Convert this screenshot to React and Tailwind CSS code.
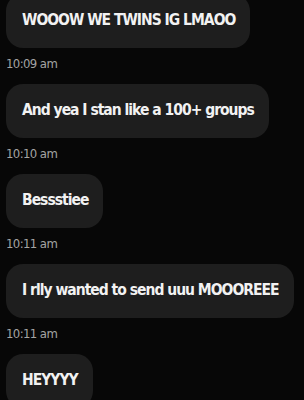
import React from 'react';

const messages = [
  { text: 'WOOOW WE TWINS IG LMAOO', time: '10:09 am' },
  { text: 'And yea I stan like a 100+ groups', time: '10:10 am' },
  { text: 'Bessstiee', time: '10:11 am' },
  { text: 'I rlly wanted to send uuu MOOOREEE', time: '10:11 am' },
  { text: 'HEYYYY', time: '10:12 am' },
];

export default function App() {
  return (
    <div
      className="w-[304px] h-[400px] overflow-hidden bg-[#070707]"
      style={{ fontFamily: '"DejaVu Sans Condensed", "DejaVu Sans", sans-serif', fontStretch: 'condensed' }}
    >
      <div className="flex flex-col items-start px-[6px] -mt-[6px]">
        {messages.map((m, i) => (
          <div key={i} className="flex flex-col items-start">
            <div className="h-[54px] flex items-center pl-4 pr-[15px] rounded-[17px] bg-[#1e1e1e] text-[#f2f2f2] text-[15.5px] font-bold tracking-[-1px] whitespace-nowrap">
              {m.text}
            </div>
            <div className="mt-[6px] mb-[10px] h-[20px] leading-[20px] text-[13px] text-[#a3a3a3] tracking-[-0.6px]">
              {m.time}
            </div>
          </div>
        ))}
      </div>
    </div>
  );
}
